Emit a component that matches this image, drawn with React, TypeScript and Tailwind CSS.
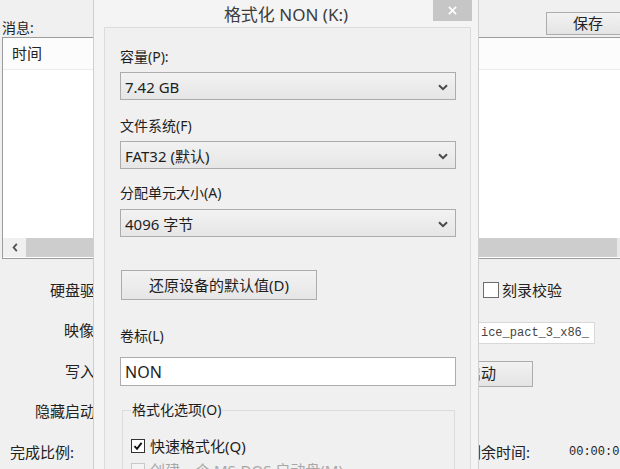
import React from 'react';

const font = { fontFamily: '"Noto Sans", "Noto Sans CJK SC", sans-serif' };

const Chevron: React.FC<{ className?: string }> = ({ className }) => (
  <svg viewBox="0 0 10 7" className={className}>
    <path d="M1 1.2 L5 5.2 L9 1.2" fill="none" stroke="#4a4a4a" strokeWidth="2" />
  </svg>
);

const Select: React.FC<{ value: string; className?: string }> = ({ value, className }) => (
  <div
    className={`flex items-center justify-between h-[28px] w-[336px] pl-[4px] pr-[7px] pt-[2px] border border-[#acacac] bg-gradient-to-b from-[#f2f2f2] to-[#e6e6e6] text-[15px] text-[#1e1e1e] ${className ?? ''}`}
  >
    <span className="leading-none">{value}</span>
    <Chevron className="w-[10px] h-[7px]" />
  </div>
);

const Label: React.FC<{ text: string; className?: string }> = ({ text, className }) => (
  <div className={`h-[20px] leading-[20px] text-[14px] text-[#1e1e1e] ${className ?? ''}`}>{text}</div>
);

// left part of a background row, clipped where the dialog starts
const RowLabel: React.FC<{ text: string; className?: string }> = ({ text, className }) => (
  <div className="w-[380px] shrink-0 flex">
    <div className={`w-[93px] overflow-hidden whitespace-nowrap ${className ?? ''}`}>{text}</div>
  </div>
);

const FormatDialog: React.FC = () => (
  <div className="absolute left-[93px] top-0 w-[386px] h-[490px] bg-[#f4f4f4] border-x border-[#cfcfcf] flex flex-col">
    <div className="relative h-[33px] flex items-start justify-center">
      <span className="mt-[3px] text-[17px] leading-[24px] text-[#3c3c3c]">格式化 NON (K:)</span>
      <div className="absolute right-[6px] top-0 w-[39px] h-[21px] bg-[#c6c6c6] flex items-center justify-center">
        <svg viewBox="0 0 10 10" className="w-[9px] h-[9px]">
          <path d="M1 1 L9 9 M9 1 L1 9" stroke="#ffffff" strokeWidth="1.8" />
        </svg>
      </div>
    </div>
    <div className="ml-[10px] mr-[7px] flex-1 bg-[#f0f0f0] border border-[#dcdcdc] pl-[15px] pt-[19px] flex flex-col">
      <Label text="容量(P):" />
      <Select value="7.42 GB" className="mt-[5px]" />
      <Label text="文件系统(F)" className="mt-[16px]" />
      <Select value="FAT32 (默认)" className="mt-[5px]" />
      <Label text="分配单元大小(A)" className="mt-[14px]" />
      <Select value="4096 字节" className="mt-[6px]" />
      <div className="mt-[33px] ml-[1px] w-[196px] h-[30px] border border-[#acacac] bg-gradient-to-b from-[#f2f2f2] to-[#e6e6e6] flex items-center justify-center text-[15px] text-[#1e1e1e]">
        还原设备的默认值(D)
      </div>
      <Label text="卷标(L)" className="mt-[26px]" />
      <div className="mt-[11px] w-[336px] h-[29px] border border-[#acacac] bg-white flex items-center pl-[4px] text-[16px] text-[#1e1e1e]">
        NON
      </div>
      <fieldset className="mt-[14px] ml-[2px] w-[333px] border border-[#dcdcdc] px-[8px] pb-[10px]">
        <legend className="px-[1px] h-[20px] leading-[20px] text-[14px] text-[#1e1e1e]">格式化选项(O)</legend>
        <div className="mt-[16px] flex items-center h-[20px] gap-[5px] text-[15px] text-[#1e1e1e]">
          <div className="w-[14px] h-[14px] border border-[#333] bg-white flex items-center justify-center">
            <svg viewBox="0 0 10 10" className="w-[10px] h-[10px]">
              <path d="M1.5 5.2 L4 7.8 L8.6 1.8" fill="none" stroke="#111" strokeWidth="1.9" />
            </svg>
          </div>
          <span>快速格式化(Q)</span>
        </div>
        <div className="mt-[4px] flex items-center h-[20px] gap-[5px] text-[15px] text-[#a8a8a8]">
          <div className="w-[14px] h-[14px] border border-[#c8c8c8] bg-[#f4f4f4]" />
          <span>创建一个 MS-DOS 启动盘(M)</span>
        </div>
      </fieldset>
    </div>
  </div>
);

export default function App() {
  return (
    <div className="relative w-[620px] h-[469px] overflow-hidden bg-[#f0f0f0] text-[#222]" style={font}>
      <div className="flex flex-col">
        <div className="flex justify-between items-start h-[37px]">
          <span className="ml-[2px] mt-[18px] text-[14px] leading-[20px]">消息:</span>
          <div className="mt-[12px] mr-[-10px] w-[84px] h-[23px] border border-[#acacac] bg-gradient-to-b from-[#f2f2f2] to-[#e4e4e4] flex items-center justify-center text-[15px]">
            保存
          </div>
        </div>
        <div className="ml-[2px] w-[640px] h-[222px] border border-[#9c9c9c] bg-white flex flex-col">
          <div className="h-[32px] border-b border-[#ececec] bg-[#fcfcfc] flex items-center pl-[9px] text-[15px]">时间</div>
          <div className="flex-1" />
          <div className="h-[19px] mb-[1px] flex">
            <div className="w-[23px] bg-[#f0f0f0] flex items-center justify-center">
              <svg viewBox="0 0 6 10" className="w-[6px] h-[9px]">
                <path d="M5 1 L1.5 5 L5 9" fill="none" stroke="#505050" strokeWidth="2" />
              </svg>
            </div>
            <div className="w-[591px] bg-[#cdcdcd]" />
            <div className="flex-1 bg-[#e8e8e8]" />
          </div>
        </div>
        <div className="mt-[11px] flex flex-col text-[15px]">
          <div className="h-[40px] flex items-center">
            <RowLabel text="硬盘驱动器:" className="pl-[50px]" />
            <div className="pl-[103px] flex items-center gap-[3px]">
              <div className="w-[16px] h-[16px] border border-[#6d6d6d] bg-white" />
              <span>刻录校验</span>
            </div>
          </div>
          <div className="h-[41px] flex items-center">
            <RowLabel text="映像文件:" className="pl-[64px]" />
            <div className="ml-[90px] w-[125px] h-[22px] mt-[4px] border border-[#d8d8d8] bg-white flex items-center justify-end pr-[5px] overflow-hidden whitespace-nowrap text-[12px] text-[#444]" style={{ fontFamily: '"Liberation Mono", monospace' }}>
              ice_pact_3_x86_
            </div>
          </div>
          <div className="h-[40px] flex items-center">
            <RowLabel text="写入方式:" className="pl-[65px]" />
            <div className="w-[153px] h-[26px] mt-[5px] border border-[#acacac] bg-gradient-to-b from-[#f2f2f2] to-[#e4e4e4] flex items-center justify-end pr-[36px]">
              启动
            </div>
          </div>
          <div className="h-[41px] flex items-center">
            <RowLabel text="隐藏启动分区:" className="pl-[35px]" />
          </div>
          <div className="h-[40px] flex items-center">
            <RowLabel text="完成比例:" className="pl-[10px]" />
            <div className="pl-[86px] w-[189px] shrink-0 whitespace-nowrap">剩余时间:</div>
            <div className="shrink-0 text-[12px] whitespace-nowrap" style={{ fontFamily: '"Liberation Mono", monospace' }}>00:00:00</div>
          </div>
        </div>
      </div>
      <FormatDialog />
    </div>
  );
}
